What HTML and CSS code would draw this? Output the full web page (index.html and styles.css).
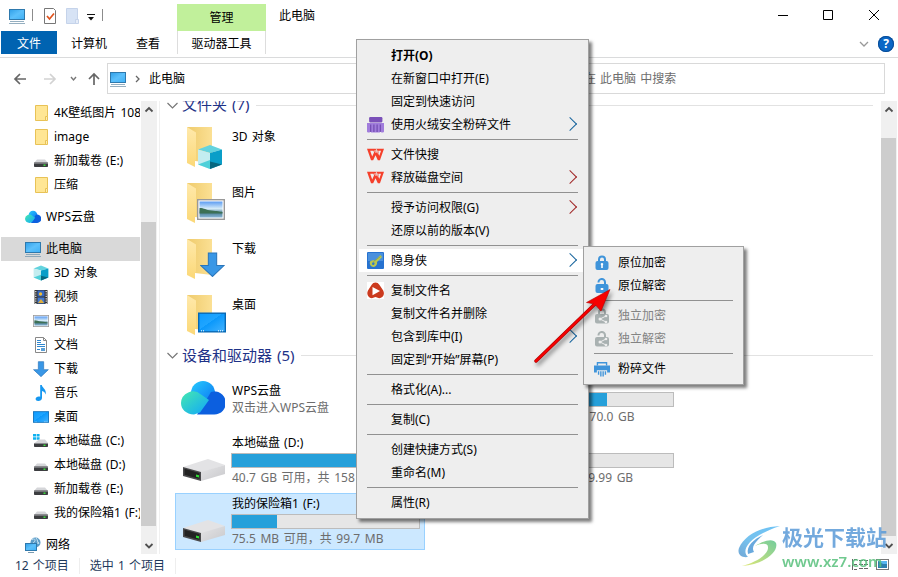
FILE: index.html
```
<!DOCTYPE html>
<html lang="zh-CN">
  <head>
    <meta charset="utf-8">
    <title>此电脑</title>
    <link rel="stylesheet" href="styles.css">
  </head>
  <body>
    <svg class="defs" width="0" height="0">
      <defs>
        <linearGradient id="g-screen" x1="0" y1="0" x2="1" y2="1"><stop offset="0" stop-color="#2f9fe8"/><stop offset=".5" stop-color="#5cc0fb"/><stop offset="1" stop-color="#3fb0f5"/></linearGradient>
        <linearGradient id="g-desk" x1="0" y1="0" x2="1" y2="1"><stop offset="0" stop-color="#0c9bff"/><stop offset=".45" stop-color="#1fa5ff"/><stop offset=".46" stop-color="#0a98fb"/><stop offset="1" stop-color="#45b4ff"/></linearGradient>
        <linearGradient id="g-cloud" x1="0" y1="0" x2="1" y2="1"><stop offset="0" stop-color="#45e8b0"/><stop offset="1" stop-color="#0fa6fb"/></linearGradient>
        <linearGradient id="g-cloud2" x1="0" y1="0" x2="1" y2="1"><stop offset="0" stop-color="#27cbfd"/><stop offset="1" stop-color="#0a72f2"/></linearGradient>
        <linearGradient id="g-back" x1="0" y1="0" x2="1" y2="0"><stop offset="0" stop-color="#efcb6c"/><stop offset="1" stop-color="#fbe094"/></linearGradient>
        <linearGradient id="g-front" x1="0" y1="0" x2="0" y2="1"><stop offset="0" stop-color="#ffe9ab"/><stop offset="1" stop-color="#fbd877"/></linearGradient>
        <linearGradient id="g-sky" x1="0" y1="0" x2="0" y2="1"><stop offset="0" stop-color="#5c9cf2"/><stop offset=".45" stop-color="#d6ecf8"/><stop offset=".7" stop-color="#4d7f96"/><stop offset="1" stop-color="#89b6d6"/></linearGradient>
        <linearGradient id="g-drive" x1="0" y1="0" x2="1" y2="1"><stop offset="0" stop-color="#e4e4e6"/><stop offset="1" stop-color="#c9c9cc"/></linearGradient>
        <linearGradient id="g-logo1" x1="1" y1="0" x2="0" y2="1"><stop offset="0" stop-color="#55b9f4"/><stop offset=".6" stop-color="#5fb8ec"/><stop offset="1" stop-color="#5a9ad0"/></linearGradient>
        <linearGradient id="g-logo2" x1="1" y1="0" x2="0" y2="1"><stop offset="0" stop-color="#5cc48c"/><stop offset="1" stop-color="#dbe35e"/></linearGradient>
      </defs>

      <symbol id="pc" viewBox="0 0 16 16">
        <rect x=".5" y="1.5" width="15" height="10" fill="url(#g-screen)" stroke="#2e79ad"/>
        <path d="M1 13.5h14M0 15.5h16" stroke="#7b9bb0" stroke-width="1" fill="none" opacity=".8"/>
      </symbol>
      <symbol id="folder" viewBox="0 0 16 16">
        <path d="M2.5.5h12v11l-1 4h-11z" fill="#ffe694" stroke="#e8c256"/>
        <path d="M12.5 15.5v-4h2v4z" fill="#ffeeb0" stroke="#e8c256"/>
      </symbol>
      <symbol id="drive" viewBox="0 0 16 16">
        <path d="M4 6.500h8l3 3.500H1z" fill="#d5d6d9"/>
        <rect x="1" y="9.500" width="14" height="4.500" rx=".8" fill="#3c3d40"/>
        <rect x="1" y="9.500" width="14" height="1.2" fill="#8b8c90"/>
        <rect x="10.5" y="11.500" width="2" height="1.4" fill="#3bea3b"/>
      </symbol>
      <symbol id="osdrive" viewBox="0 0 16 16">
        <path d="M0 1h3v2.500H0zM3.600 1h3v2.500h-3zM0 4.200h3v2.500H0zM3.600 4.200h3v2.500h-3z" fill="#0fb1f0"/>
        <path d="M6 6.500h6l3 3.500H1.500z" fill="#d5d6d9"/>
        <rect x="1" y="10" width="14" height="4" rx=".8" fill="#3c3d40"/>
        <rect x="1" y="10" width="14" height="1" fill="#8b8c90"/>
        <rect x="10.500" y="11.600" width="2" height="1.400" fill="#3bea3b"/>
      </symbol>
      <symbol id="cloud" viewBox="0 0 44 34">
        <circle cx="22" cy="12" r="12" fill="url(#g-cloud2)"/>
        <path d="M22 24L30 11a11.500 11.500 0 1 1 3 22.500H16z" fill="#0c5fdf"/>
        <path d="M28 19L19 31.500l-6 2C5 33 0 28.500 0 22a12 12 0 0 1 20-8.500z" fill="url(#g-cloud)"/>
      </symbol>
      <symbol id="cube" viewBox="0 0 26 26">
        <path d="M1 5.500L13 1l12 4.500L13 9z" fill="#63d3de"/>
        <path d="M1 5.500L13 9v16L1 20.500z" fill="#c3edf0"/>
        <path d="M25 5.500L13 9v16l12-4.500z" fill="#0a9ec8"/>
        <path d="M13 16l-12 4.500L13 25z" fill="#27c6d2" opacity=".75"/>
        <path d="M13 17.500l12 3L13 25z" fill="#07677f"/>
      </symbol>
      <symbol id="film" viewBox="0 0 16 16">
        <rect x="1.500" y="1" width="13" height="14" fill="#333"/>
        <path d="M2.800 2v13M13.200 2v13" stroke="#eee" stroke-width="1.200" stroke-dasharray="1.200 1.200"/>
        <rect x="4.500" y="1.500" width="7" height="6" fill="#3569c4"/><rect x="4.500" y="8.500" width="7" height="6" fill="#4379d0"/>
        <circle cx="7.500" cy="5" r="1.700" fill="#eebc35"/><path d="M5 14l3-4 3 4z" fill="#dfae3c"/>
      </symbol>
      <symbol id="photo" viewBox="0 0 28 21">
        <rect x=".7" y=".7" width="26.600" height="19.600" fill="#fff" stroke="#999" stroke-width="1.400"/>
        <rect x="2.500" y="2.500" width="23" height="16" fill="url(#g-sky)"/>
        <path d="M2.500 9c5 0 6 2 12 2.500s8 1 11 1.500v1.500h-23z" fill="#3d7055"/>
      </symbol>
      <symbol id="doc" viewBox="0 0 16 16">
        <path d="M2.500.5h8l3 3v12h-11z" fill="#fff" stroke="#888"/>
        <path d="M10.500.5v3h3" fill="none" stroke="#888"/>
        <path d="M4 3.500h4M4 5.500h4M4 7.500h8M4 9.500h8M4 12.500h3" stroke="#2f87cf"/>
        <rect x="8" y="11" width="4" height="3" fill="#5a9fd6"/>
      </symbol>
      <symbol id="down" viewBox="0 0 24 24">
        <path d="M8 1h8v12h7L12 23.500.8 13H8z" fill="#3997e6" stroke="#2a76bb" stroke-width="1"/>
      </symbol>
      <symbol id="note" viewBox="0 0 16 16">
        <path d="M7.200 0h1.600c.4 3.200 5.400 4.200 3.600 9.600-.4-2.400-1.600-3.200-3.400-3.600v6.900c0 3.600-6.400 4.200-6.400 1.100 0-2.200 2.800-3.100 4.600-2.200z" fill="#1597f0"/>
      </symbol>
      <symbol id="desk" viewBox="0 0 28 20">
        <rect x=".7" y=".7" width="26.600" height="18.600" fill="url(#g-desk)" stroke="#0668b4" stroke-width="1.400"/>
        <path d="M3 18.300h3M20 18.300h5" stroke="#fff" stroke-dasharray="1 1"/>
      </symbol>
      <symbol id="network" viewBox="0 0 16 16">
        <circle cx="10.500" cy="5.500" r="5" fill="#5b9cc8"/>
        <path d="M7 3c3-3 4 1 2 2s3 3 5 0M11 1c2 2 1 4 3 6" fill="none" stroke="#c8e4f3"/>
        <rect x=".5" y="6.500" width="11" height="7" fill="url(#g-screen)" stroke="#2e79ad"/>
        <path d="M3 15.500h6" stroke="#7b9bb0"/>
      </symbol>
      <symbol id="bigfolder" viewBox="0 0 40 42">
        <path d="M0 0h25v36L8 34z" fill="url(#g-back)"/>
        <path d="M0 0l9 5.500V33l-1 1v6L0 36z" fill="url(#g-front)"/>
      </symbol>
      <symbol id="bigdrive" viewBox="0 0 44 24">
        <path d="M1 9L26 1l17 6-24 8z" fill="#e3e3e5"/>
        <path d="M19 14l24-7v9l-24 7z" fill="url(#g-drive)"/>
        <path d="M1 9l18 5v9L1 18z" fill="#4a4a4c"/>
        <path d="M2.500 10.800l15 4.200v6l-15-4.200z" fill="#222"/>
        <path d="M14 16.400l3 .8v2.300l-3-.8z" fill="#2fdc34"/>
      </symbol>
      <symbol id="wps" viewBox="0 0 16 16">
        <path fill-rule="evenodd" d="M0 2.500h16l-3.800 11h-2L8 8.800l-2.200 4.700h-2zM3 4.500l1.900 5.400 1.800-4-.7-1.400zM10.600 4.500l.9 5 1.700-5z" fill="#f5402b"/>
        <path d="M7 4.500h2.500l-1 1.800zM8.500 2.500l2.500 5.500" fill="#f5402b" stroke="#eee" stroke-width=".7"/>
      </symbol>
      <symbol id="shred" viewBox="0 0 16 16">
        <rect x="2" y="1" width="12.500" height="5" rx="1" fill="#7a50b8"/>
        <path d="M0 6.500h16v7a1.500 1.500 0 0 1-3 1v-1l-1 2h-8l-1-1a1.500 1.500 0 0 1-3-1z" fill="#a17ddc"/>
        <path d="M3.500 8v7M6.500 8v7M9.500 8v7M12.500 8v7" stroke="#6c45ab" stroke-width="1"/>
      </symbol>
      <symbol id="key" viewBox="0 0 17 17">
        <rect width="17" height="17" rx="1" fill="#2672d0"/><rect x="1" y="1" width="15" height="8" fill="#4a90dd"/>
        <path d="M3 9.500c2-1.500 4-1.500 5-1L13.500 3l1.500 2-5 5c.5 2-.5 4-2.500 4.800-3 1-5.500-2.300-4.500-5.300z" fill="#b9c64f"/>
        <path d="M5 11.500c.5-1.500 2-1.500 2.500-.5s-.8 2.500-2 2z" fill="#3079cc"/>
        <path d="M6.500 9.500l7-5" stroke="#7d9a4a" stroke-width=".7"/>
      </symbol>
      <symbol id="play" viewBox="0 0 17 17">
        <rect width="17" height="17" fill="#fff"/>
        <path d="M4.500 3C6.500-.3 10.500-.3 12.500 3l3.700 5.500c2 4-.5 7.800-4 7.800L8.500 15l-3.700 1.300C1 16-.8 12 1 8.500z" fill="#cb3a1e"/>
        <path d="M5.500 5L13 9l-7.500 4.200z" fill="#fff"/>
      </symbol>
      <symbol id="lock" viewBox="0 0 14 16">
        <path d="M4 7V4.500a3 3 0 0 1 6 0V7" fill="none" stroke="#3f94da" stroke-width="2"/>
        <rect x=".5" y="6" width="13" height="9" rx="2" fill="#3f94da"/>
        <path d="M7 8a1.300 1.300 0 0 1 .8 2.300V13H6.200v-2.700A1.300 1.300 0 0 1 7 8z" fill="#fff"/>
      </symbol>
      <symbol id="unlock" viewBox="0 0 14 16">
        <path d="M3.500 4.500A3.200 3.200 0 0 1 10 4v3" fill="none" stroke="#3f94da" stroke-width="2"/>
        <rect x=".5" y="6" width="13" height="9" rx="2" fill="#3f94da"/>
        <rect x="5.500" y="10" width="3" height="2" rx="1" fill="#fff"/>
      </symbol>
      <symbol id="lockshare" viewBox="0 0 14 16">
        <path d="M4 7V4.500a3 3 0 0 1 6 0V7" fill="none" stroke="#a9b1b1" stroke-width="2"/>
        <rect x="0" y="6" width="14" height="9.500" rx="2" fill="#a9b1b1"/>
        <path d="M11 8l-6 3 6 3" fill="none" stroke="#eee" stroke-width="1"/><circle cx="5" cy="11" r="1.500" fill="#eee"/><circle cx="11" cy="8" r="1.300" fill="#eee"/><circle cx="11" cy="14" r="1.300" fill="#eee"/>
      </symbol>
      <symbol id="unlockshare" viewBox="0 0 14 16">
        <path d="M3.500 4.500A3.200 3.200 0 0 1 10 4v3" fill="none" stroke="#a9b1b1" stroke-width="2"/>
        <rect x="0" y="6" width="14" height="9.500" rx="2" fill="#a9b1b1"/>
        <path d="M11 8l-6 3 6 3" fill="none" stroke="#eee" stroke-width="1"/><circle cx="5" cy="11" r="1.500" fill="#eee"/><circle cx="11" cy="8" r="1.300" fill="#eee"/><circle cx="11" cy="14" r="1.300" fill="#eee"/>
      </symbol>
      <symbol id="shredblue" viewBox="0 0 14 14">
        <path d="M3 4V1.500h8V4" fill="none" stroke="#3f94da" stroke-width="1.200"/>
        <path d="M0 4h14v6h-2.500V8h-9v2H0z" fill="#3f94da"/>
        <path d="M4 9v3M6 9v4.500M8 9v4.500M10 9v3" stroke="#3f94da" stroke-width="1.200"/>
      </symbol>
    </svg>

    <div class="window">
      <div class="titlebar">
        <div class="quick">
          <svg class="i16"><use href="#pc"/></svg>
          <span class="bar first"></span>
          <svg class="i16" viewBox="0 0 16 16"><path d="M2.500.5h9l2 2v13h-11z" fill="#fff" stroke="#777"/><path d="M5 8l2.500 3L12 5.500" fill="none" stroke="#e0521c" stroke-width="1.700"/></svg>
          <svg class="i16 pale" viewBox="0 0 16 16"><path d="M2.500.5h11v15h-11z" fill="#d7e3f5" stroke="#c5d3ea"/><path d="M11.500 11.500h3v4h-3z" fill="#e6edf8" stroke="#c5d3ea"/></svg>
          <svg class="more" width="8" height="7" viewBox="0 0 8 7"><path d="M0 .5h8" stroke="#111"/><path d="M1 3h6L4 6.500z" fill="#111"/></svg>
          <span class="bar"></span>
        </div>
        <div class="manage">管理</div>
        <div class="title">此电脑</div>
        <svg class="caption" width="102" height="12" viewBox="0 0 102 12">
          <path d="M0 6.500h10M45.500 1.500h9v9h-9zM91 1l10 10M101 1L91 11" fill="none" stroke="#000"/>
        </svg>
      </div>

      <div class="ribbon">
        <div class="tab file">文件</div>
        <div class="tab computer">计算机</div>
        <div class="tab view">查看</div>
        <div class="tab tools">驱动器工具</div>
        <div class="help">
          <svg width="10" height="6" viewBox="0 0 10 6"><path d="M1 1l4 4 4-4" fill="none" stroke="#999" stroke-width="1.300"/></svg>
          <span class="question">?</span>
        </div>
      </div>

      <div class="navbar">
        <svg class="history" width="88" height="16" viewBox="0 0 88 16">
          <g fill="none" stroke-width="1.700">
            <path d="M13 8H2M7 3L2 8l5 5" stroke="#666"/>
            <path d="M31 8h11M37 3l5 5-5 5" stroke="#d2d2d2"/>
            <path d="M58 6l2.500 3L63 6" stroke="#777" stroke-width="1.400"/>
            <path d="M81 14V3M76 8l5-5 5 5" stroke="#666"/>
          </g>
        </svg>
        <div class="address">
          <svg class="i16"><use href="#pc"/></svg>
          <svg width="5" height="8" viewBox="0 0 5 8"><path d="M1 1l3 3-3 3" fill="none" stroke="#666" stroke-width="1.300"/></svg>
          <span>此电脑</span>
        </div>
        <div class="search">在 此电脑 中搜索</div>
      </div>

      <div class="main">
        <div class="tree">
          <div class="node"><svg class="i16"><use href="#folder"/></svg>4K壁纸图片 1080</div>
          <div class="node"><svg class="i16"><use href="#folder"/></svg>image</div>
          <div class="node"><svg class="i16"><use href="#drive"/></svg>新加载卷 (E:)</div>
          <div class="node"><svg class="i16"><use href="#folder"/></svg>压缩</div>
          <div class="node root"><svg class="i16"><use href="#cloud"/></svg>WPS云盘</div>
          <div class="node root current"><svg class="i16"><use href="#pc"/></svg>此电脑</div>
          <div class="node"><svg class="i16"><use href="#cube"/></svg>3D 对象</div>
          <div class="node"><svg class="i16"><use href="#film"/></svg>视频</div>
          <div class="node"><svg class="i16"><use href="#photo"/></svg>图片</div>
          <div class="node"><svg class="i16"><use href="#doc"/></svg>文档</div>
          <div class="node"><svg class="i16"><use href="#down"/></svg>下载</div>
          <div class="node"><svg class="i16"><use href="#note"/></svg>音乐</div>
          <div class="node"><svg class="i16"><use href="#desk"/></svg>桌面</div>
          <div class="node"><svg class="i16"><use href="#osdrive"/></svg>本地磁盘 (C:)</div>
          <div class="node"><svg class="i16"><use href="#drive"/></svg>本地磁盘 (D:)</div>
          <div class="node"><svg class="i16"><use href="#drive"/></svg>新加载卷 (E:)</div>
          <div class="node"><svg class="i16"><use href="#drive"/></svg>我的保险箱1 (F:)</div>
          <div class="node root"><svg class="i16"><use href="#network"/></svg>网络</div>
        </div>
        <div class="scroll tree-scroll">
          <svg class="arr" viewBox="0 0 16 17"><path d="M4.500 10.500L8 7l3.500 3.500" /></svg>
          <div class="thumb"></div>
          <svg class="arr" viewBox="0 0 16 17"><path d="M4.500 7L8 10.500 11.500 7" /></svg>
        </div>

        <div class="content">
          <div class="group first">
            <svg width="11" height="7" viewBox="0 0 11 7"><path d="M.5 1l5 5 5-5" /></svg>
            <span>文件夹 (7)</span><i></i>
          </div>
          <div class="folders">
            <div class="folder"><div class="pic"><svg class="base"><use href="#bigfolder"/></svg><svg class="mark cube"><use href="#cube"/></svg></div>3D 对象</div>
            <div class="folder"><div class="pic"><svg class="base"><use href="#bigfolder"/></svg><svg class="mark photo"><use href="#photo"/></svg></div>图片</div>
            <div class="folder"><div class="pic"><svg class="base"><use href="#bigfolder"/></svg><svg class="mark down"><use href="#down"/></svg></div>下载</div>
            <div class="folder"><div class="pic"><svg class="base"><use href="#bigfolder"/></svg><svg class="mark desk"><use href="#desk"/></svg></div>桌面</div>
          </div>
          <div class="group">
            <svg width="11" height="7" viewBox="0 0 11 7"><path d="M.5 1l5 5 5-5" /></svg>
            <span>设备和驱动器 (5)</span><i></i>
          </div>
          <div class="drives">
            <div class="drive cloud">
              <svg class="dpic"><use href="#cloud"/></svg>
              <div class="info"><div>WPS云盘</div><div class="sub">双击进入WPS云盘</div></div>
            </div>
            <div class="drive">
              <svg class="dpic"><use href="#bigdrive"/></svg>
              <div class="info"><div>本地磁盘 (C:)</div><div class="meter"><b style="width:64.5%"></b></div><div class="sub">60 GB 可用，共 &nbsp;170.0 GB</div></div>
            </div>
            <div class="drive">
              <svg class="dpic"><use href="#bigdrive"/></svg>
              <div class="info"><div>本地磁盘 (D:)</div><div class="meter"><b style="width:74%"></b></div><div class="sub">40.7 GB 可用，共 158 GB</div></div>
            </div>
            <div class="drive">
              <svg class="dpic"><use href="#bigdrive"/></svg>
              <div class="info"><div>新加载卷 (E:)</div><div class="meter"><b style="width:10%"></b></div><div class="sub">8.9 GB 可用，共 99.99 GB</div></div>
            </div>
            <div class="drive selected">
              <svg class="dpic"><use href="#bigdrive"/></svg>
              <div class="info"><div>我的保险箱1 (F:)</div><div class="meter"><b style="width:24.300%"></b></div><div class="sub">75.5 MB 可用，共 99.7 MB</div></div>
            </div>
          </div>
        </div>
        <div class="scroll content-scroll">
          <svg class="arr" viewBox="0 0 16 17"><path d="M4.500 10.500L8 7l3.500 3.500" /></svg>
          <div class="thumb"></div>
          <svg class="arr" viewBox="0 0 16 17"><path d="M4.500 7L8 10.500 11.500 7" /></svg>
        </div>
      </div>

      <div class="status">
        <span class="count">12 个项目</span>
        <span class="count">选中 1 个项目</span>
        <svg class="views" width="38" height="13" viewBox="0 0 38 13">
          <path d="M.5 1v11M2 1.500h3M2 6.500h3M2 11.500h3M7 2.500h4M12 2.500h4M7 6.500h4M12 6.500h4M7 10.500h4M12 10.500h4" stroke="#666" fill="none"/>
          <rect x="24.500" y="1.500" width="12" height="10" fill="#fff" stroke="#777"/><rect x="26" y="3" width="9" height="7" fill="#2d7fae"/><path d="M26 3h9v3h-4z" fill="#57b6f0"/>
        </svg>
      </div>

      <div class="menu main-menu">
        <div class="item strong">打开(O)</div>
        <div class="item">在新窗口中打开(E)</div>
        <div class="item">固定到快速访问</div>
        <div class="item more"><svg class="mi"><use href="#shred"/></svg>使用火绒安全粉碎文件</div>
        <hr>
        <div class="item"><svg class="mi"><use href="#wps"/></svg>文件快搜</div>
        <div class="item more red"><svg class="mi"><use href="#wps"/></svg>释放磁盘空间</div>
        <hr>
        <div class="item more red">授予访问权限(G)</div>
        <div class="item">还原以前的版本(V)</div>
        <hr>
        <div class="item more hover"><svg class="mi"><use href="#key"/></svg>隐身侠</div>
        <hr>
        <div class="item"><svg class="mi"><use href="#play"/></svg>复制文件名</div>
        <div class="item">复制文件名并删除</div>
        <div class="item more">包含到库中(I)</div>
        <div class="item">固定到“开始”屏幕(P)</div>
        <hr>
        <div class="item">格式化(A)...</div>
        <hr>
        <div class="item">复制(C)</div>
        <hr>
        <div class="item">创建快捷方式(S)</div>
        <div class="item">重命名(M)</div>
        <hr>
        <div class="item">属性(R)</div>
      </div>

      <div class="menu sub-menu">
        <div class="item"><svg class="mi"><use href="#lock"/></svg>原位加密</div>
        <div class="item"><svg class="mi"><use href="#unlock"/></svg>原位解密</div>
        <hr>
        <div class="item off"><svg class="mi"><use href="#lockshare"/></svg>独立加密</div>
        <div class="item off"><svg class="mi"><use href="#unlockshare"/></svg>独立解密</div>
        <hr>
        <div class="item"><svg class="mi"><use href="#shredblue"/></svg>粉碎文件</div>
      </div>

      <svg class="pointer" width="90" height="90" viewBox="0 0 90 90">
        <path d="M9 81L68 24" stroke="#a80000" stroke-width="3.400" stroke-linecap="round"/>
        <path d="M83 9.500L59.500 22.500l8 1.500 1.500 1.500 5 5.500z" fill="#f60000" stroke="#b00000" stroke-width=".6"/>
        <path d="M9 81L70 22" stroke="#f60000" stroke-width="2.400" stroke-linecap="round"/>
      </svg>

      <div class="watermark">
        <svg width="42" height="42" viewBox="0 0 42 42">
          <path d="M42 0C22 1 7 9 1 22c-2 6 2 10 9 9C3 25 9 11 42 0z" fill="url(#g-logo1)"/>
          <path d="M10 28c-2-8 6-15 15-19-8 7-12 12-9 17z" fill="#4f9bd8"/>
          <path d="M17 20c10-6 18-8 21-3 3 9-13 22-34 23 15-4 27-12 26-19 0-4-6-4-13-1z" fill="url(#g-logo2)"/>
        </svg>
        <div>
          <div class="brand">极光下载站</div>
          <div class="url">www.xz7.com</div>
        </div>
      </div>
    </div>
  </body>
</html>
```
FILE: styles.css
```
* {
  box-sizing: border-box;
}
body {
  margin: 0;
  background: #fff;
  color: #000;
  font-family: "Noto Sans", "Noto Sans CJK SC", sans-serif;
  font-size: 12px;
  line-height: 16px;
  word-spacing: 1px;
}
svg {
  flex: none;
  display: block;
}
.defs {
  position: absolute;
}
.i16 {
  width: 16px;
  height: 16px;
}
.window {
  position: relative;
  display: flex;
  flex-direction: column;
  width: 898px;
  height: 577px;
  overflow: hidden;
}

/* title bar */
.titlebar {
  display: flex;
  height: 31px;
}
.quick {
  display: flex;
  align-items: center;
  width: 177px;
  padding-left: 9px;
}
.quick .bar {
  width: 1px;
  height: 12px;
  margin: -2px 0 0 7px;
  background: #8c8c8c;
}
.quick .bar.first {
  margin: -2px 9px 0 7px;
}
.quick .pale {
  margin-left: 6px;
}
.quick .more {
  margin: 3px 0 0 7px;
}
.manage {
  width: 89px;
  margin-top: 4px;
  background: #c1f09b;
  text-align: center;
  line-height: 27px;
}
.title {
  padding: 8px 0 0 13px;
}
.caption {
  margin: 9px 18px 0 auto;
}

/* ribbon tabs */
.ribbon {
  display: flex;
  height: 27px;
  padding-left: 1px;
  border-bottom: 1px solid #dadbdc;
}
.tab {
  height: 23px;
  text-align: center;
  line-height: 25px;
}
.file {
  width: 56px;
  background: #0063b1;
  color: #fff;
}
.computer {
  width: 64px;
}
.view {
  width: 56px;
  padding-right: 2px;
}
.tools {
  width: 89px;
  border: solid #ddd;
  border-width: 0 1px;
}
.help {
  display: flex;
  align-items: center;
  gap: 9px;
  height: 26px;
  margin: 0 4px 0 auto;
}
.question {
  width: 16px;
  height: 16px;
  border-radius: 50%;
  background: #0b67c6;
  box-shadow: 0 0 0 1px #094c96 inset;
  color: #fff;
  font-weight: bold;
  text-align: center;
}

/* address row */
.navbar {
  display: flex;
  height: 43px;
  padding: 5px 13px 7px 0;
}
.history {
  margin: 8px 6px 0 13px;
}
.address,
.search {
  display: flex;
  align-items: center;
  height: 31px;
  border: 1px solid #d9d9d9;
}
.address {
  gap: 9px;
  width: 438px;
  padding-left: 2px;
}
.search {
  flex: 1;
  margin-left: 10px;
  padding-left: 28px;
  color: #6d6d6d;
}

/* tree */
.main {
  display: flex;
  height: 453px;
}
.tree {
  width: 139px;
  margin: 0 1px;
  overflow: hidden;
}
.node {
  display: flex;
  align-items: center;
  gap: 5px;
  height: 24px;
  padding-left: 32px;
  white-space: nowrap;
}
.node.root {
  margin-top: 8px;
  padding-left: 24px;
}
.node.current {
  background: #d9d9d9;
}

.scroll {
  display: flex;
  flex-direction: column;
  justify-content: space-between;
  width: 16px;
  background: #f0f0f0;
}
.scroll .thumb {
  flex: 1;
  width: 15px;
  background: #cdcdcd;
}
.arr {
  width: 16px;
  height: 17px;
}
.arr path {
  fill: none;
  stroke: #505050;
  stroke-width: 1.8;
}
.tree-scroll {
  margin-right: 2px;
}
.tree-scroll .thumb {
  margin: 104px 0 11px;
}
.content-scroll .thumb {
  margin: 20px 0 1px;
}

/* content */
.content {
  width: 722px;
  padding-right: 8px;
  border-left: 1px solid #f0f0f0;
  overflow: hidden;
}
.group {
  display: flex;
  align-items: center;
  height: 22px;
  padding-left: 7px;
  color: #1e3287;
  font-size: 15px;
}
.group.first {
  margin-top: -7px;
}
.group span {
  margin: -1px 7px 0 4px;
}
.group.first span {
  margin-top: -3px;
}
.group path {
  fill: none;
  stroke: #777;
  stroke-width: 1.2;
}
.group i {
  flex: 1;
  height: 1px;
  background: #e2e2e2;
}
.folders {
  padding: 5px 0 0 27px;
}
.folder {
  display: flex;
  height: 56px;
  padding-top: 8px;
}
.folder .pic {
  position: relative;
  width: 45px;
  height: 44px;
  margin-top: -1px;
}
.folder .base {
  width: 40px;
  height: 42px;
  margin-top: -1px;
}
.mark {
  position: absolute;
}
.mark.cube {
  left: 10px;
  top: 16px;
  width: 26px;
  height: 26px;
}
.mark.photo {
  left: 10px;
  top: 15px;
  width: 28px;
  height: 21px;
}
.mark.down {
  left: 13px;
  top: 12px;
  width: 25px;
  height: 25px;
}
.mark.desk {
  left: 11px;
  top: 16px;
  width: 28px;
  height: 21px;
}
.folders + .group {
  margin-top: -1px;
}
.drives {
  display: grid;
  grid-template-columns: 250px 250px;
  gap: 4px;
  padding: 5px 0 0 15px;
}
.drive {
  display: flex;
  height: 57px;
  padding: 2px 4px 0 6px;
  border: 1px solid transparent;
}
.dpic {
  width: 44px;
  height: 24px;
  margin: 23px 5px 0 0;
}
.info {
  flex: 1;
  white-space: nowrap;
}
.info > div:first-child {
  padding-left: 1px;
}
.cloud .dpic {
  height: 34px;
  margin: 7px 6px 0 -1px;
}
.cloud .info {
  padding-top: 9px;
}
.sub {
  padding-left: 1px;
  color: #6d6d6d;
  word-spacing: 1.5px;
}
.cloud .sub {
  padding-top: 1px;
}
.meter {
  height: 15px;
  margin: 2px 0;
  border: 1px solid #bcbcbc;
  background: #e6e6e6;
}
.meter b {
  display: block;
  height: 100%;
  background: #26a0da;
}
.selected {
  border-color: #99d1ff;
  background: #cce8ff;
}

/* status bar */
.status {
  display: flex;
  align-items: center;
  height: 23px;
  padding-left: 15px;
  color: #1e395b;
}
.count {
  padding-right: 10px;
  margin-right: 10px;
  border-right: 1px solid #eee;
}
.views {
  margin: -3px 8px 0 auto;
}

/* context menus */
.menu {
  position: absolute;
  padding: 4px 2px;
  border: 1px solid #a0a0a0;
  background: #eee;
  box-shadow: 3px 3px 3px rgba(0, 0, 0, .5);
}
.main-menu {
  left: 356px;
  top: 39px;
  width: 233px;
  height: 480px;
}
.sub-menu {
  left: 583px;
  top: 246px;
  width: 161px;
  height: 139px;
}
.item {
  display: flex;
  position: relative;
  align-items: center;
  height: 23px;
  padding-left: 32px;
  white-space: nowrap;
}
.menu hr {
  height: 1px;
  margin: 3px 8px;
  border: 0;
  background: #919191;
}
.mi {
  width: 17px;
  height: 17px;
  margin: 0 7px 0 -24px;
}
.sub-menu .mi {
  width: 16px;
  height: 16px;
  margin-right: 8px;
}
.strong {
  font-weight: bold;
}
.hover {
  background: #fff;
}
.off {
  color: #838383;
}
.more.item::after {
  content: "";
  width: 9px;
  height: 9px;
  margin: -2px 11px 0 auto;
  border: solid #15639c;
  border-width: 1px 1px 0 0;
  transform: rotate(45deg);
}
.more.red::after {
  border-color: #a02626;
}

.pointer {
  position: absolute;
  left: 527px;
  top: 280px;
  filter: drop-shadow(2px 3px 2px rgba(0, 0, 0, .45));
}
.watermark {
  display: flex;
  position: absolute;
  left: 738px;
  top: 526px;
  gap: 2px;
  opacity: .85;
}
.brand {
  margin-top: -2px;
  color: #5b9bd8;
  font-size: 21px;
  font-weight: bold;
  line-height: 27px;
}
.url {
  color: #58c07c;
  font-size: 15px;
  font-weight: 600;
  line-height: 20px;
}
```
